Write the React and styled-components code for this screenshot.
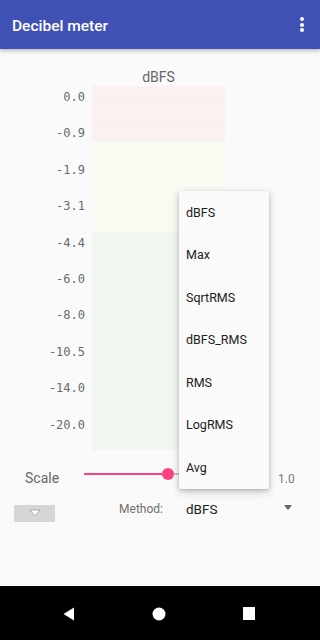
import React from 'react';
import styled, { createGlobalStyle } from 'styled-components';

const GlobalStyle = createGlobalStyle`
    html, body {
        margin: 0;
        padding: 0;
        background: #fafafa;
    }
    body {
        font-family: Roboto, "Noto Sans", sans-serif;
    }
`

const LABELS = ['0.0', '-0.9', '-1.9', '-3.1', '-4.4', '-6.0', '-8.0', '-10.5', '-14.0', '-20.0'];
const METHODS = ['dBFS', 'Max', 'SqrtRMS', 'dBFS_RMS', 'RMS', 'LogRMS', 'Avg'];

// 20 segments: 3 red, 5 yellow, 12 green
const SEGMENTS = Array.from({ length: 20 }, (_, i) => (i < 3 ? 'red' : i < 8 ? 'yellow' : 'green'));

const ZONE = {
    red: { bg: '#fbf1f1', line: '#f8eded' },
    yellow: { bg: '#fafaf3', line: '#f6f6ee' },
    green: { bg: '#f1f8f1', line: '#edf5ed' },
};

const App = () => {
    return (
        <Screen>
            <GlobalStyle />
            <AppBar>
                <Title>Decibel meter</Title>
                <Overflow>
                    <span /><span /><span />
                </Overflow>
            </AppBar>
            <Content>
                <MeterTitle>dBFS</MeterTitle>
                <Meter>
                    <Labels>
                        {LABELS.map((l) => <Label key={l}>{l}</Label>)}
                    </Labels>
                    <Bar>
                        {SEGMENTS.map((zone, i) => <Segment key={i} zone={zone} />)}
                    </Bar>
                </Meter>
                <ScaleRow>
                    <ScaleLabel>Scale</ScaleLabel>
                    <Slider>
                        <Track />
                        <ActiveTrack />
                        <Thumb />
                    </Slider>
                    <ScaleValue>1.0</ScaleValue>
                </ScaleRow>
                <MethodRow>
                    <ToggleButton>
                        <svg width="12" height="8" viewBox="0 0 12 8">
                            <path d="M1 1 L11 1 L6 7 Z" fill="#fff" stroke="#a8a8a8" strokeWidth="1" strokeLinejoin="round" />
                        </svg>
                    </ToggleButton>
                    <MethodLabel>Method:</MethodLabel>
                    <Spinner>
                        <span>dBFS</span>
                        <svg width="8" height="5" viewBox="0 0 8 5">
                            <path d="M0 0 L8 0 L4 5 Z" fill="#616161" />
                        </svg>
                    </Spinner>
                </MethodRow>
                <Menu>
                    {METHODS.map((m) => <MenuItem key={m}>{m}</MenuItem>)}
                </Menu>
            </Content>
            <NavBar>
                <svg width="12" height="14" viewBox="0 0 12 14">
                    <path d="M11 0.5 L11 13.5 L0.5 7 Z" fill="#fff" />
                </svg>
                <svg width="14" height="14" viewBox="0 0 14 14">
                    <circle cx="7" cy="7" r="6.5" fill="#fff" />
                </svg>
                <svg width="12" height="13" viewBox="0 0 12 13">
                    <rect x="0" y="0" width="12" height="13" fill="#fff" />
                </svg>
            </NavBar>
        </Screen>
    )
}

const Screen = styled.div`
    width: 320px;
    height: 640px;
    display: flex;
    flex-direction: column;
    background: #fafafa;
    overflow: hidden;
`

const AppBar = styled.div`
    height: 49px;
    flex-shrink: 0;
    background: #3f51b5;
    display: flex;
    align-items: center;
    justify-content: space-between;
    padding: 0 16px 0 12px;
    box-shadow: 0 2px 4px rgba(0,0,0,0.25);
    position: relative;
    z-index: 2;
`

const Title = styled.div`
    color: #fff;
    font-size: 15.5px;
    font-weight: 500;
    margin-top: 2px;
`

const Overflow = styled.div`
    display: flex;
    flex-direction: column;
    gap: 1.5px;
    span {
        width: 4px;
        height: 4px;
        border-radius: 50%;
        background: #fff;
    }
`

const Content = styled.div`
    flex: 1;
    position: relative;
    display: flex;
    flex-direction: column;
`

const MeterTitle = styled.div`
    margin: 20px 0 0 92px;
    width: 133px;
    text-align: center;
    font-size: 14px;
    line-height: 17px;
    color: #666;
`

const Meter = styled.div`
    display: flex;
    gap: 7px;
`

const Labels = styled.div`
    width: 85px;
    display: flex;
    flex-direction: column;
`

const Label = styled.div`
    height: 36.4px;
    box-sizing: border-box;
    padding-top: 4px;
    line-height: 14px;
    text-align: right;
    font-family: "DejaVu Sans Mono", "Liberation Mono", monospace;
    font-size: 12px;
    color: #6a6a6a;
`

const Bar = styled.div`
    width: 133px;
    display: flex;
    flex-direction: column;
`

const Segment = styled.div`
    height: 18.2px;
    box-sizing: border-box;
    background: ${(p) => ZONE[p.zone].bg};
    border-bottom: 1px solid ${(p) => ZONE[p.zone].line};
`

const ScaleRow = styled.div`
    display: flex;
    align-items: center;
    height: 20px;
    margin-top: 14px;
`

const ScaleLabel = styled.div`
    width: 84px;
    padding-left: 25px;
    box-sizing: border-box;
    font-size: 14px;
    color: #666;
    margin-top: 8px;
`

const Slider = styled.div`
    position: relative;
    width: 172px;
    height: 12px;
`

const Track = styled.div`
    position: absolute;
    left: 0;
    right: 0;
    top: 5px;
    height: 2px;
    background: #c8c8c8;
`

const ActiveTrack = styled.div`
    position: absolute;
    left: 0;
    width: 84px;
    top: 5px;
    height: 2px;
    background: #ff4081;
`

const Thumb = styled.div`
    position: absolute;
    left: 78px;
    top: 0;
    width: 12px;
    height: 12px;
    border-radius: 50%;
    background: #ff4081;
`

const ScaleValue = styled.div`
    margin-left: 22px;
    font-size: 12px;
    color: #777;
    margin-top: 10px;
`

const MethodRow = styled.div`
    display: flex;
    align-items: flex-start;
    margin-top: 17px;
    height: 22px;
`

const ToggleButton = styled.div`
    margin: 4px 0 0 14px;
    width: 41px;
    height: 17px;
    background: #d6d6d6;
    border-radius: 1px;
    display: flex;
    align-items: center;
    justify-content: center;
`

const MethodLabel = styled.div`
    width: 108px;
    text-align: right;
    font-size: 12px;
    line-height: 16px;
    color: #707070;
`

const Spinner = styled.div`
    display: flex;
    align-items: center;
    justify-content: space-between;
    margin-left: 23px;
    width: 106px;
    height: 16px;
    font-size: 13.5px;
    color: #212121;
    svg {
        margin-top: -2px;
    }
`

const Menu = styled.div`
    position: absolute;
    left: 179px;
    top: 142px;
    width: 90px;
    background: #fafafa;
    box-shadow: 0 3px 8px rgba(0,0,0,0.22), 0 1px 3px rgba(0,0,0,0.15);
    border-radius: 2px;
    display: flex;
    flex-direction: column;
    z-index: 3;
`

const MenuItem = styled.div`
    height: 42.5px;
    display: flex;
    align-items: center;
    padding-left: 7px;
    font-size: 12.5px;
    color: #212121;
`

const NavBar = styled.div`
    height: 54px;
    flex-shrink: 0;
    background: #000;
    display: flex;
    align-items: center;
    justify-content: space-around;
    padding: 0 26px 0 24px;
    svg {
        margin-bottom: -1px;
    }
`

export default App
